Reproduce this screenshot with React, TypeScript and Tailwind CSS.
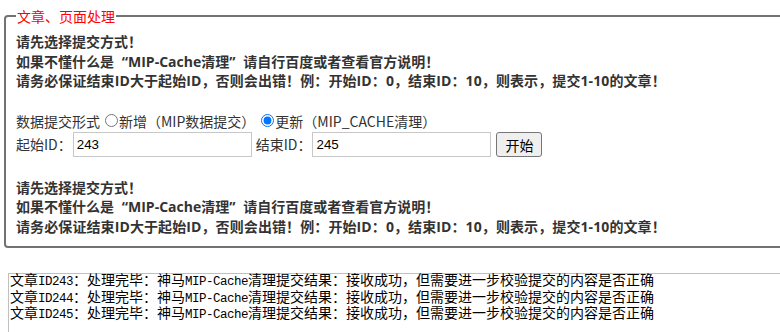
import { useState } from 'react'

const results = [243, 244, 245]

// full-width curly quotes, like YaHei draws them
function Q({ open }: { open?: boolean }) {
  return (
    <span className={open ? 'inline-block w-[14px] text-right' : 'inline-block w-[14px] text-left'}>
      {open ? '“' : '”'}
    </span>
  )
}

function Tips() {
  return (
    <div
      className="text-[14px] font-bold leading-[19.5px] text-[#333]"
      style={{ fontFamily: '"Open Sans", "Noto Sans CJK SC", sans-serif' }}
    >
      <div className="whitespace-nowrap">请先选择提交方式！</div>
      <div className="whitespace-nowrap">
        如果不懂什么是<Q open />MIP-Cache清理<Q />请自行百度或者查看官方说明！
      </div>
      <div className="whitespace-nowrap tracking-[0.1px]">
        请务必保证结束ID大于起始ID，否则会出错！例：开始ID：0，结束ID：10，则表示，提交1-10的文章！
      </div>
    </div>
  )
}

// latin bits in the result log are half width, like the old SimSun output
function Half({ children }: { children: React.ReactNode }) {
  return <span className="text-[12.5px] tracking-[-0.5px]">{children}</span>
}

export default function App() {
  const [mode, setMode] = useState<'add' | 'update'>('update')
  const [startId, setStartId] = useState('243')
  const [endId, setEndId] = useState('245')

  return (
    <div className="w-[780px] h-[332px] overflow-hidden bg-white" style={{ fontFamily: '"Noto Sans CJK SC", "Open Sans", sans-serif' }}>
      <fieldset className="mt-[6px] ml-[4px] w-[800px] border-2 border-[#737373] rounded-[4px] pl-[10px] pr-[10px] pt-[6px] pb-[10px]">
        <legend className="text-[14px] leading-[20px] text-[#ff0000] px-[1px]">文章、页面处理</legend>
        <Tips />

        <div className="mt-[20px] h-[20px] flex items-center text-[14px] leading-[20px] text-[#333] whitespace-nowrap">
          <span>数据提交形式</span>
          <input type="radio" name="mode" checked={mode === 'add'} onChange={() => setMode('add')} className="ml-[5px] mr-[1px] w-[13px] h-[13px]" />
          <span>新增（MIP数据提交）</span>
          <input type="radio" name="mode" checked={mode === 'update'} onChange={() => setMode('update')} className="ml-[6px] mr-[1px] w-[13px] h-[13px] accent-[#0075ff]" />
          <span>更新（MIP_CACHE清理）</span>
        </div>

        <div className="mt-[1px] h-[26px] flex items-center text-[14px] text-[#333] whitespace-nowrap">
          <span>起始ID：</span>
          <input
            value={startId}
            onChange={e => setStartId(e.target.value)}
            className="ml-[1px] w-[179px] h-[25px] border border-[#c8c8c8] px-[3px] text-[13.33px] text-black outline-none"
            style={{ fontFamily: '"Liberation Sans", Arial, sans-serif' }}
          />
          <span className="ml-[4px]">结束ID：</span>
          <input
            value={endId}
            onChange={e => setEndId(e.target.value)}
            className="ml-[1px] w-[179px] h-[25px] border border-[#c8c8c8] px-[3px] text-[13.33px] text-black outline-none"
            style={{ fontFamily: '"Liberation Sans", Arial, sans-serif' }}
          />
          <button className="ml-[5px] w-[46px] h-[25px] bg-[#efefef] border border-[#767676] rounded-[3px] text-[14px] text-black leading-none">开始</button>
        </div>

        <div className="mt-[20px]">
          <Tips />
        </div>
      </fieldset>

      <div
        className="mt-[25px] ml-[8px] w-[800px] h-[80px] border-t border-l border-[#c0c0c0] pl-[1px] text-[14px] leading-[15.5px] text-black"
        style={{ fontFamily: '"Liberation Mono", "Noto Sans CJK SC", monospace' }}
      >
        {results.map(id => (
          <div key={id} className="whitespace-nowrap">
            文章<Half>ID{id}</Half>：处理完毕：神马<Half>MIP-Cache</Half>清理提交结果：接收成功，但需要进一步校验提交的内容是否正确
          </div>
        ))}
      </div>
    </div>
  )
}
